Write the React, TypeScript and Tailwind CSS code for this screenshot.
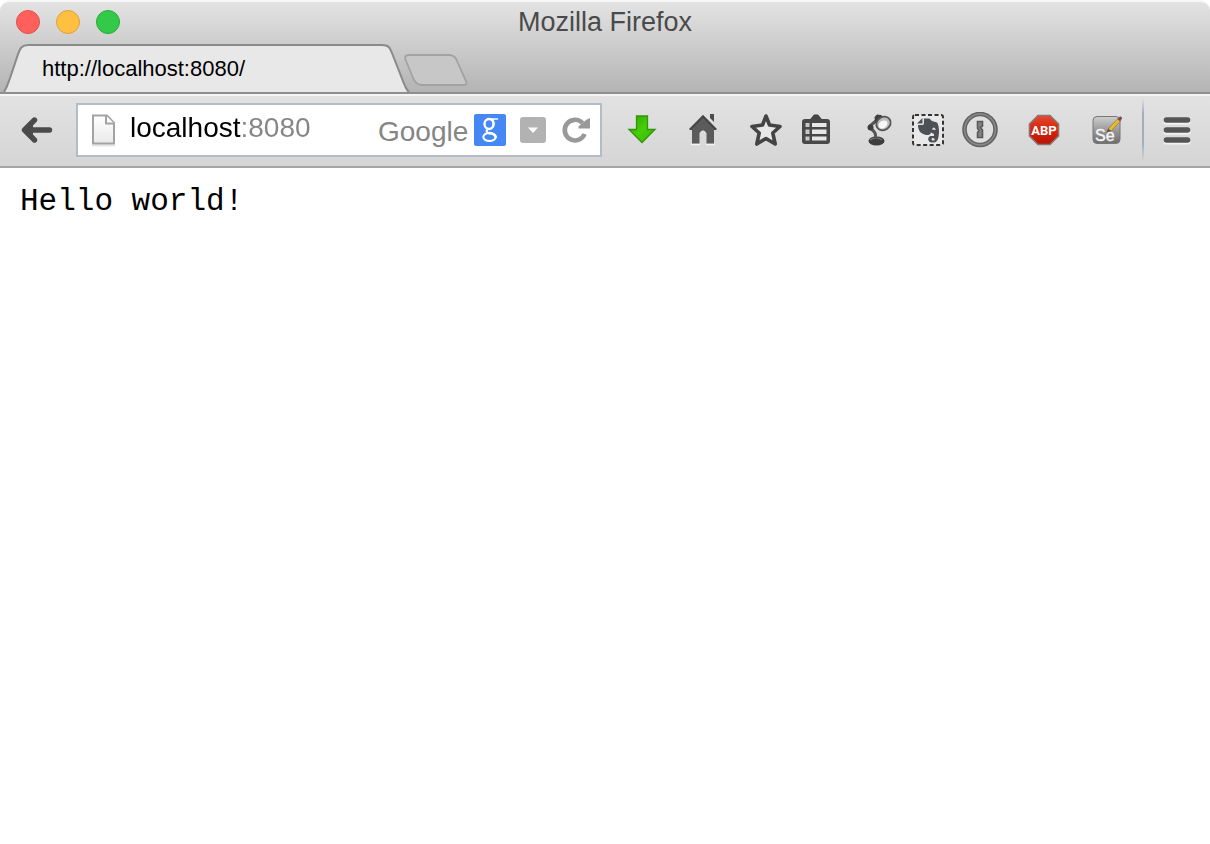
import { useState } from "react";
import type { ReactNode } from "react";

function ToolButton({ label, wide = false, children }: { label: string; wide?: boolean; children: ReactNode }) {
  return (
    <button type="button" aria-label={label} className={wide ? "h-9 w-9 shrink-0" : "h-8 w-8 shrink-0"}>
      {children}
    </button>
  );
}

function WindowButtons() {
  return (
    <div className="flex gap-4">
      <button type="button" aria-label="Close" className="size-6 rounded-full border border-[#e2504c] bg-[#ff605c]" />
      <button type="button" aria-label="Minimize" className="size-6 rounded-full border border-[#dda03c] bg-[#ffbf40]" />
      <button type="button" aria-label="Zoom" className="size-6 rounded-full border border-[#27ab38] bg-[#34ca49]" />
    </div>
  );
}

function TabStrip() {
  return (
    <div className="flex h-[50px] pt-0.5">
      <button type="button" className="flex h-12 text-left">
        <svg className="h-12 w-7" viewBox="0 0 28 48" aria-hidden="true">
          <path d="M5 48 C8 44 9 39 11 34 L19 11 C21 5 23 1.5 28 1.5 L28 48 Z" fill="#e8e8e8" />
          <path d="M4 48 C7 43 8 39 10 34 L18 10 C20 4 22 1 28 1" fill="none" stroke="#8b8b8b" strokeWidth="2" />
        </svg>
        <span className="h-12 w-[354px] truncate border-t-2 border-[#8b8b8b] bg-[#e8e8e8] pl-[14px] text-[22px] leading-[46px] text-black">
          http://localhost:8080/
        </span>
        <svg className="h-12 w-7" viewBox="0 0 28 48" aria-hidden="true">
          <path d="M0 1.5 C6 1.5 7 4 9 9 L20 37 C22 42 23 45 25 48 L0 48 Z" fill="#e8e8e8" />
          <path d="M0 1 C7 1 8 4 10 9 L21 37 C23 42 24 45 27 48" fill="none" stroke="#8b8b8b" strokeWidth="2" />
        </svg>
      </button>
      <button type="button" aria-label="New tab" className="h-12 w-16">
        <svg viewBox="0 0 64 48" className="h-12 w-16 overflow-visible" aria-hidden="true">
          <path
            d="M-1 11 H39 C44 11 46 14 47 17 L56 37 C57.5 40 56 41 54 41 H12 C7 41 5 38 3.5 35 L-4 17 C-6 12 -4 11 -1 11 Z"
            fill="#c7c7c7"
            stroke="#a2a2a2"
            strokeWidth="1.8"
          />
        </svg>
      </button>
    </div>
  );
}

function AddressBar() {
  const [address, setAddress] = useState("localhost:8080");
  return (
    <form
      onSubmit={(e) => e.preventDefault()}
      className="flex h-[54px] min-w-0 flex-1 items-center border-2 border-[#b3bbc7] bg-white pr-2 pl-3"
    >
      <svg viewBox="0 0 28 36" className="h-9 w-7 shrink-0" aria-hidden="true">
        <defs>
          <linearGradient id="page" x1="0" y1="0" x2="0" y2="1">
            <stop offset="0" stopColor="#fff" />
            <stop offset="1" stopColor="#e9e9e9" />
          </linearGradient>
        </defs>
        <path d="M2 33.5 H25" stroke="#000" strokeOpacity="0.1" strokeWidth="2" />
        <path d="M3 3.500 H17 L24 11 V31.500 H3 Z" fill="url(#page)" stroke="#a3a3a3" strokeWidth="2" />
        <path d="M16 3.500 V11.500 H24" fill="#fff" stroke="#a3a3a3" strokeWidth="2" />
      </svg>
      <input
        aria-label="Address"
        value={address}
        onChange={(e) => setAddress(e.target.value)}
        className="ml-3 h-10 min-w-0 flex-1 bg-[linear-gradient(to_right,#000_111px,#858585_111px)] bg-clip-text pb-1 text-[28px] text-transparent caret-black outline-none"
      />
      <input
        aria-label="Search with Google"
        placeholder="Google"
        className="h-10 w-24 pt-1 text-[28px] text-[#333] outline-none placeholder:text-[#858585] placeholder:opacity-100"
      />
      <svg viewBox="0 0 32 32" className="size-8 shrink-0" role="img" aria-label="Google">
        <rect width="32" height="32" rx="2" fill="#4487f5" />
        <g fill="none" stroke="#fff" strokeLinecap="round">
          <ellipse cx="15" cy="10" rx="4.500" ry="5" strokeWidth="2.400" />
          <path d="M14.500 5 H23.500 M19 6 C20 8 20 11 19 13" strokeWidth="1.600" />
          <path d="M14 15 C11.500 17 12.500 18.500 15.500 19.500" strokeWidth="2.200" />
          <ellipse cx="15.500" cy="23" rx="6.200" ry="4" strokeWidth="2" />
          <path d="M15.500 19 C19 19.500 21 20.500 21.700 23" strokeWidth="2.600" />
        </g>
      </svg>
      <button type="button" aria-label="Show history" className="ml-[14px] size-[26px] shrink-0">
        <svg viewBox="0 0 26 26" className="size-[26px]" aria-hidden="true">
          <rect width="26" height="26" rx="3" fill="#b2b2b2" />
          <path d="M8 10.500 H18 L13 16 Z" fill="#fff" />
        </svg>
      </button>
      <button type="button" aria-label="Reload" className="ml-[14px] size-8 shrink-0">
        <svg viewBox="0 0 32 32" className="size-8" aria-hidden="true">
          <path d="M24.600 20 A10.300 10.300 0 1 1 22.500 9" fill="none" stroke="#999" strokeWidth="4.600" />
          <path d="M30 4 V14.500 H18.500 V12.500 L26 6 Z" fill="#999" />
        </svg>
      </button>
    </form>
  );
}

function ToolbarIcons() {
  return (
    <div className="flex shrink-0 items-center gap-[30px]">
      <ToolButton label="Downloads">
        <svg viewBox="0 0 32 32" className="size-8" aria-hidden="true">
          <defs>
            <linearGradient id="green" x1="0" y1="0" x2="1" y2="1">
              <stop offset="0" stopColor="#2d9f00" />
              <stop offset="0.5" stopColor="#46cf08" />
              <stop offset="1" stopColor="#35b500" />
            </linearGradient>
          </defs>
          <path d="M10.500 2 H21.500 V15.500 H29 L16 28.500 L3 15.500 H10.500 Z" fill="url(#green)" stroke="#329407" strokeWidth="1.300" />
        </svg>
      </ToolButton>
      <ToolButton label="Home">
        <svg viewBox="0 0 32 32" className="size-8" aria-hidden="true">
          <path d="M3 30.500 H12 M18 30.500 H27" stroke="#f4f4f4" strokeWidth="1.500" />
          <path d="M15 1 L28.500 15 V16 H26 V29.500 H18.500 V19 Q15 13.500 11.500 19 V29.500 H4 V16 H1.500 V15 Z" fill="#5b5b5b" />
          <path d="M2 15.500 L15 2.500 L28 15.500" fill="none" stroke="#454545" strokeWidth="2" />
          <path d="M22 0 H26 V8 L22 4 Z" fill="#4b4b4b" />
        </svg>
      </ToolButton>
      <div className="flex gap-[18px]">
        <ToolButton label="Bookmark this page">
          <svg viewBox="0 0 32 32" className="size-8" aria-hidden="true">
            <path
              d="M16 2 L19.500 11 L30 12.500 L22.800 19 L25.200 30 L16 24.500 L6.800 30 L9.200 19 L2 12.500 L12.500 11 Z"
              fill="#e8e8e8"
              stroke="#444"
              strokeWidth="3.600"
              strokeLinejoin="round"
            />
          </svg>
        </ToolButton>
        <ToolButton label="Show your bookmarks">
          <svg viewBox="0 0 32 32" className="size-8" aria-hidden="true">
            <path d="M9.500 6 L14 0.500 H18 L22.500 6 Z" fill="#444" />
            <rect x="2" y="5" width="28" height="25" rx="3" fill="#484848" />
            <path d="M5.500 9 H9.500 V13 H5.500 Z M5.500 15.500 H9.500 V20 H5.500 Z M5.500 22.500 H9.500 V26.500 H5.500 Z" fill="#c8c8c8" />
            <path d="M12 9 H26.500 V13 H12 Z M12 15.500 H26.500 V20 H12 Z M12 22.500 H26.500 V26.500 H12 Z" fill="#e6e6e6" />
          </svg>
        </ToolButton>
      </div>
      <div className="flex items-center gap-[18px]">
        <ToolButton label="Reading lamp">
          <svg viewBox="0 0 32 32" className="size-8" aria-hidden="true">
            <ellipse cx="14.500" cy="27" rx="8" ry="4.500" fill="#3c3c3c" />
            <path d="M8 26 Q14 22 20 26" fill="none" stroke="#777" strokeWidth="1.200" />
            <path d="M13 24 C15 20 12 17 9.500 15 L8 12 L15 6" fill="none" stroke="#555" strokeWidth="3" strokeLinejoin="round" />
            <circle cx="8.500" cy="13.500" r="3" fill="#3f3f3f" />
            <path d="M12.500 3 L15 0.500 L19 1 L23 4 L17 16 L13 8 Z" fill="#414141" />
            <ellipse cx="21.500" cy="9.500" rx="7.500" ry="6.500" transform="rotate(-35 21.500 9.500)" fill="#bdbdbd" stroke="#555" strokeWidth="1.800" />
            <ellipse cx="21" cy="10.500" rx="4.800" ry="3.600" transform="rotate(-35 21 10.500)" fill="#f8f8f8" />
          </svg>
        </ToolButton>
        <ToolButton label="Evernote clipper">
          <svg viewBox="0 0 32 32" className="size-8" aria-hidden="true">
            <rect x="1" y="1" width="30" height="30" rx="2" fill="#e9e9e9" stroke="#333" strokeWidth="2" strokeDasharray="4 2.500" />
            <path
              d="M12 4.500 H17.500 L20 7 L25 8.500 C27.500 12 27.500 20 26 25 C25 28 23 28.500 20 28.500 C15.500 28.500 15 23 18.500 22 H22 V20 L19 18.500 C18 21.500 15 21.500 12.500 20.500 C7.500 19 6 15 6 11 H10.500 Q12 11 12 9 Z"
              fill="#4d5156"
            />
            <path d="M5 9.500 L10.500 4 V9.500 Z" fill="#4d5156" />
            <path d="M20 15.500 Q21.500 11.500 24 16 Z" fill="#e2e2e2" />
            <path d="M19.500 25 Q20 23.500 22.500 24.500 V26.500 H20 Z" fill="#e5e5e5" />
          </svg>
        </ToolButton>
        <ToolButton label="1Password" wide>
          <svg viewBox="0 0 36 36" className="size-9" aria-hidden="true">
            <circle cx="18" cy="17.500" r="15.500" fill="#dfdfdf" stroke="#636363" strokeWidth="4.600" />
            <circle cx="18" cy="17.500" r="15.400" fill="none" stroke="#8a8a8a" strokeWidth="1.500" />
            <path
              d="M15.500 9.500 H20.500 V14 L18.500 15.500 L20.500 18 V25.500 H15.500 V20.500 L17 18.500 L15.500 16.500 Z"
              fill="#828282"
              stroke="#5a5a5a"
              strokeWidth="1.600"
            />
          </svg>
        </ToolButton>
      </div>
      <ToolButton label="Adblock Plus">
        <svg viewBox="0 0 32 32" className="size-8" aria-hidden="true">
          <defs>
            <linearGradient id="stop" x1="0" y1="0" x2="0" y2="1">
              <stop offset="0" stopColor="#e34a32" />
              <stop offset="0.450" stopColor="#db250c" />
              <stop offset="1" stopColor="#b71407" />
            </linearGradient>
          </defs>
          <path d="M10 1.500 H22 L30.500 10 V22 L22 30.500 H10 L1.500 22 V10 Z" fill="url(#stop)" stroke="#8b7470" strokeWidth="1.600" />
          <text x="16" y="20.500" textAnchor="middle" fill="#fff" fontFamily="Liberation Sans Narrow, Roboto, sans-serif" fontWeight="700" fontSize="13">
            ABP
          </text>
        </svg>
      </ToolButton>
      <ToolButton label="Selenium IDE">
        <svg viewBox="0 0 32 32" className="size-8" aria-hidden="true">
          <defs>
            <linearGradient id="selenium" x1="0" y1="0" x2="0" y2="1">
              <stop offset="0" stopColor="#cfcfcf" />
              <stop offset="0.500" stopColor="#9a9a9a" />
              <stop offset="1" stopColor="#6e6e6e" />
            </linearGradient>
          </defs>
          <rect x="3" y="2.500" width="27" height="27" rx="4" fill="url(#selenium)" stroke="#777" />
          <text x="5" y="27" fill="#f5f5f5" stroke="#f5f5f5" strokeWidth="0.400" fontFamily="Liberation Sans, sans-serif" fontSize="16">
            Se
          </text>
          <path d="M17 18 L19 14 L28 4.500 L30.500 7 L21.500 16.500 Z" fill="#e5bd32" stroke="#9b7927" strokeWidth="0.800" />
          <path d="M16.500 18.500 L18.500 14.500 L21 17 Z" fill="#555" />
          <path d="M27.500 5 L30 2.500 Q32 2 32 4.500 L30 7.500 Z" fill="#824550" />
        </svg>
      </ToolButton>
    </div>
  );
}

export default function App() {
  return (
    <div className="flex min-h-screen flex-col bg-white font-['Liberation_Sans',Arial,sans-serif]">
      <header className="overflow-hidden rounded-t-[10px] border-t-2 border-[#f7f7f7] bg-[linear-gradient(to_bottom,#e3e3e3_0px,#b3b3b3_92px)]">
        <div className="grid h-10 grid-cols-[1fr_auto_1fr] items-center px-4">
          <WindowButtons />
          <h1 className="text-[27px] leading-none text-[#4a4a4a]">Mozilla Firefox</h1>
        </div>
        <TabStrip />
        <nav
          aria-label="Navigation toolbar"
          className="flex h-[76px] items-center border-t-2 border-b-2 border-t-[#8e8e8e] border-b-[#a5a5a5] bg-[linear-gradient(to_bottom,#f5f5f5_0px,#f5f5f5_2px,#e2e2e2_2px,#d5d5d5_100%)]"
        >
          <button type="button" aria-label="Back" className="h-8 w-[76px] shrink-0 pl-[21px]">
            <svg viewBox="0 0 32 32" className="size-8" aria-hidden="true">
              <path d="M13.500 6 L3.500 16 L13.500 26 M7 16 H28.500" fill="none" stroke="#4b4b4b" strokeWidth="5.400" strokeLinecap="round" strokeLinejoin="round" />
              <path d="M4 16 L12 9 V23 Z" fill="#4b4b4b" />
            </svg>
          </button>
          <AddressBar />
          <div className="w-6 shrink-0" />
          <ToolbarIcons />
          <div className="ml-5 h-16 w-0.5 shrink-0 bg-[linear-gradient(to_bottom,transparent,#a4adb8_25%,#a4adb8_70%,transparent)]" />
          <button type="button" aria-label="Open menu" className="h-8 w-[66px] shrink-0 pl-[17px]">
            <svg viewBox="0 0 32 32" className="size-8" aria-hidden="true">
              <path d="M5 8 H27 M5 18 H27 M5 28 H27" stroke="#f3f3f3" strokeWidth="5" strokeLinecap="round" />
              <path d="M5.500 6 H26.500 M5.500 16 H26.500 M5.500 26 H26.500" stroke="#555" strokeWidth="5.600" strokeLinecap="round" />
            </svg>
          </button>
        </nav>
      </header>
      <main className="flex-1 px-5 pt-4">
        <pre className="font-['Liberation_Mono','Courier_New',monospace] text-[31px] leading-9 text-black">Hello world!</pre>
      </main>
    </div>
  );
}
